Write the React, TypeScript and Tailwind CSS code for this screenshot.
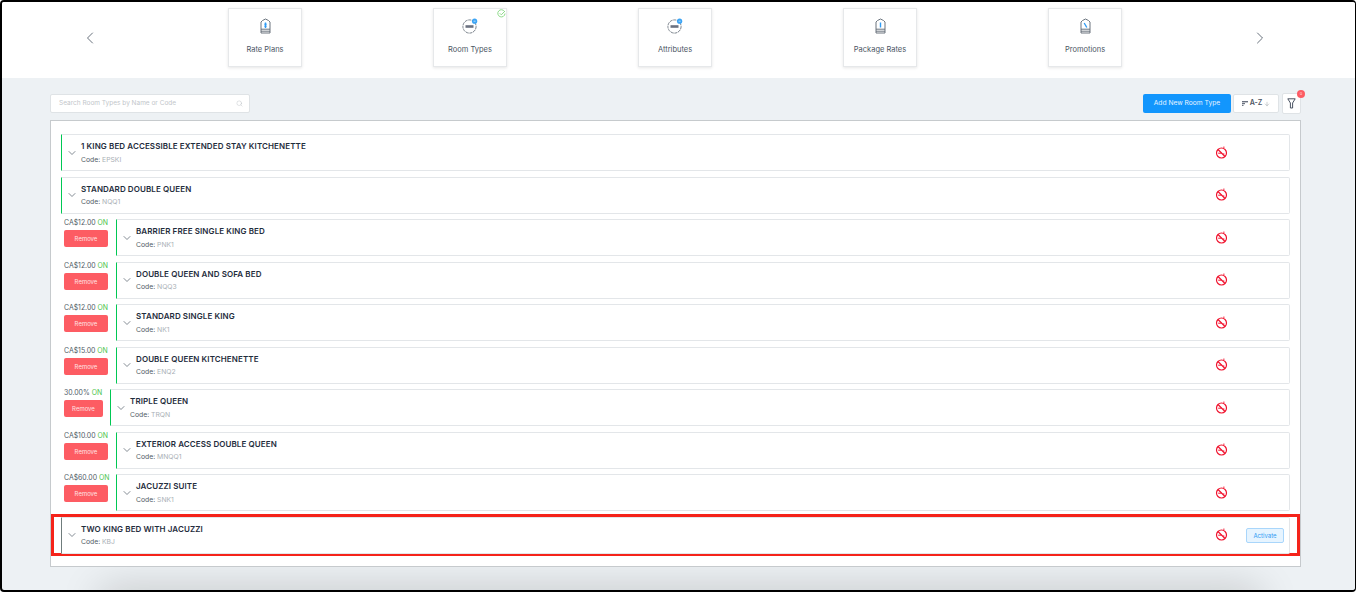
import React from "react";
import { ChevronLeft, ChevronRight, ChevronDown, Search, ArrowDown } from "lucide-react";

// carousel icons
const TagIcon = ({ mark }: { mark: string }) => (
  <svg width="11" height="16" viewBox="0 0 11 16" fill="none">
    <path d="M1 15V4l1.5-1.5L5.5 1l3 1.5L10 4v11z" stroke="#5b6570" strokeWidth="0.9" />
    <path d="M1 11.2h9M1 13.2h9" stroke="#5b6570" strokeWidth="0.9" />
    <path d={mark} stroke="#2f9bf4" strokeWidth="1.4" />
  </svg>
);

const RoomIcon = () => (
  <svg width="16" height="16" viewBox="0 0 16 16" fill="none">
    <circle cx="7.5" cy="8.5" r="6.6" stroke="#5b6570" strokeWidth="0.8" strokeDasharray="3 0.7" />
    <rect x="3.5" y="7.2" width="8" height="2.6" fill="#6b7280" />
    <circle cx="12.6" cy="3.2" r="2.6" fill="#3ba4f5" />
    <path d="M11.6 3.2h2" stroke="#fff" strokeWidth="0.6" />
  </svg>
);

const NoSmoking = () => (
  <svg width="13" height="13" viewBox="0 0 13 13" fill="none" stroke="#f0142f" className="-mt-px">
    <circle cx="6.5" cy="7" r="5" strokeWidth="1.2" />
    <path d="M3 3.5l7 7" strokeWidth="1.2" />
    <path d="M3.2 7.2h3.4M8 8h1.4" strokeWidth="1" />
    <path d="M8 2.4c.9-.4 1.1-1 .9-1.9" strokeWidth="0.9" />
  </svg>
);

const carousel = [
  { label: "Rate Plans", icon: <TagIcon mark="M5.5 4.5v5.5M4.4 6.2h2.2M4.4 8.2h2.2" /> },
  { label: "Room Types", icon: <RoomIcon />, done: true },
  { label: "Attributes", icon: <RoomIcon /> },
  { label: "Package Rates", icon: <TagIcon mark="M5.5 4.5v5" /> },
  { label: "Promotions", icon: <TagIcon mark="M4.2 5l2.6 4.5" /> },
];

type RoomRow = { name: string; code: string; price?: string };

const rooms: RoomRow[] = [
  { name: "1 KING BED ACCESSIBLE EXTENDED STAY KITCHENETTE", code: "EPSKI" },
  { name: "STANDARD DOUBLE QUEEN", code: "NQQ1" },
  { name: "BARRIER FREE SINGLE KING BED", code: "PNK1", price: "CA$12.00" },
  { name: "DOUBLE QUEEN AND SOFA BED", code: "NQQ3", price: "CA$12.00" },
  { name: "STANDARD SINGLE KING", code: "NK1", price: "CA$12.00" },
  { name: "DOUBLE QUEEN KITCHENETTE", code: "ENQ2", price: "CA$15.00" },
  { name: "TRIPLE QUEEN", code: "TRQN", price: "30.00%" },
  { name: "EXTERIOR ACCESS DOUBLE QUEEN", code: "MNQQ1", price: "CA$10.00" },
  { name: "JACUZZI SUITE", code: "SNK1", price: "CA$60.00" },
];

const RoomCard = ({ name, code, inactive }: { name: string; code: string; inactive?: boolean }) => (
  <div
    className={`flex h-[37px] min-w-0 flex-1 items-center rounded-r-[2px] border border-[#e3e6e9] bg-white ${
      inactive ? "border-l-[#6f7c7c]" : "border-l-[#00c853]"
    }`}
  >
    <ChevronDown size={12} strokeWidth={1.5} className="ml-[4px] text-[#5b6570]" />
    <div className="ml-[3px] flex min-w-0 flex-1 flex-col gap-[2.5px]">
      <span className="text-[8px] leading-[11px] font-semibold tracking-[0.1px] text-[#1f2d3d]">{name}</span>
      <span className="text-[6.8px] leading-[9px] text-[#4f5b66]">
        Code: <span className="text-[#a9afb5]">{code}</span>
      </span>
    </div>
    <NoSmoking />
    <div className="flex w-[61px] justify-end pr-[5px]">
      {inactive && (
        <button className="h-[15px] w-[38px] rounded-[2px] border border-[#a9d6fb] bg-[#e6f4ff] text-[6px] text-[#2f9bf4]">
          Activate
        </button>
      )}
    </div>
  </div>
);

export default function App() {
  return (
    <div className="h-[592px] w-[1356px] overflow-hidden rounded-[4px] border-t-2 border-r border-b-2 border-l-2 border-black bg-[#edf1f4] font-['Inter',sans-serif]">
      <div className="flex h-[76px] items-start bg-white pt-[6px] pl-[78px]">
        <ChevronLeft size={20} strokeWidth={1} className="mt-[20px] mr-[128px] text-[#4b5563]" />
        <div className="flex gap-[131px]">
          {carousel.map((c) => (
            <div
              key={c.label}
              className="relative flex h-[59px] w-[74px] flex-col items-center border border-[#e6e8ea] bg-white pt-[9px] shadow-[0_1px_3px_rgba(0,0,0,0.1)]"
            >
              <div className="flex h-[16px] items-center">{c.icon}</div>
              <span className="mt-[11px] text-[7.5px] leading-[10px] text-[#4b5563]">{c.label}</span>
              {c.done && (
                <svg width="9" height="9" viewBox="0 0 9 9" fill="none" stroke="#8edb8a" className="absolute top-0 right-0">
                  <path d="M7.5 2.5A3.6 3.6 0 1 0 8 4.5" strokeWidth="1" />
                  <path d="M2.8 4.3l1.5 1.5L8 2" strokeWidth="1" />
                </svg>
              )}
            </div>
          ))}
        </div>
        <ChevronRight size={20} strokeWidth={1} className="mt-[20px] ml-[128px] text-[#4b5563]" />
      </div>

      <div className="pt-[16px] pl-[48px]">
        <div className="flex h-[19px] w-[1251px] items-center justify-between">
          <div className="flex h-[19px] w-[200px] items-center justify-between rounded-[2px] border border-[#dfe3e6] bg-white pr-[6px] pl-[8px]">
            <span className="text-[6.5px] text-[#c2c6ca]">Search Room Types by Name or Code</span>
            <Search size={7} strokeWidth={1} className="text-[#9aa1a7]" />
          </div>
          <div className="flex items-center">
            <button className="h-[19px] w-[88px] rounded-[2px] bg-[#1296fd] text-[6.7px] text-[#e8f4ff]">Add New Room Type</button>
            <div className="ml-[2px] flex h-[19px] w-[46px] items-center justify-center gap-[2px] rounded-[2px] border border-[#dfe3e6] bg-white text-[7px] font-semibold text-[#4b5563]">
              <svg width="6" height="5" viewBox="0 0 6 5" fill="#6b7280">
                <rect width="6" height="1.4" />
                <rect y="2" width="3" height="1.2" />
                <rect y="3.8" width="1.5" height="1.2" />
              </svg>
              A-Z
              <ArrowDown size={6} className="text-[#9aa1a7]" />
            </div>
            <div className="relative ml-[3px] flex h-[21px] w-[19px] items-center justify-center rounded-[2px] border border-[#dfe3e6] bg-white">
              <svg width="9" height="11" viewBox="0 0 9 11" fill="none" stroke="#374151" strokeWidth="0.9">
                <path d="M.8.8h7.4L5.6 5v5H3.4V5z" />
              </svg>
              <span className="absolute -top-[4px] -right-[5px] flex h-[8px] w-[8px] items-center justify-center rounded-full bg-[#fd5c63] text-[4px] text-[#ffd9db]">
                0
              </span>
            </div>
          </div>
        </div>

        <div className="relative z-10 mt-[7px] h-[447px] w-[1251px] border border-[#c6cacd] bg-white px-[10px] pt-[13px]">
          <div className="flex flex-col gap-[5.5px]">
            {rooms.map((r) => (
              <div key={r.name} className="flex items-center">
                {r.price && (
                  <div
                    className={`ml-[3px] -mt-[1px] flex flex-col self-start ${
                      r.price.startsWith("CA") ? "mr-[8px] w-[44px]" : "mr-[7px] w-[39px]"
                    }`}
                  >
                    <span className="text-[6.9px] leading-[10px] whitespace-nowrap text-[#4f5b66]">
                      {r.price} <span className="text-[#4cc44c]">ON</span>
                    </span>
                    <button className="mt-[2px] h-[17px] rounded-[2px] bg-[#fd5c63] text-[6px] text-[#ffe3e4]">Remove</button>
                  </div>
                )}
                <RoomCard name={r.name} code={r.code} />
              </div>
            ))}
            <div className="-mx-[10px] -mt-[2.5px] flex h-[42px] items-center border-[3px] border-[#f5231a] px-[7px]">
              <RoomCard name="TWO KING BED WITH JACUZZI" code="KBJ" inactive />
            </div>
          </div>
        </div>
        {/* shadow of whatever sits below the fold */}
        <div className="mt-[23px] ml-[50px] h-[30px] w-[1160px] bg-white shadow-[0_0_40px_rgba(0,0,0,0.2)]" />
      </div>
    </div>
  );
}
